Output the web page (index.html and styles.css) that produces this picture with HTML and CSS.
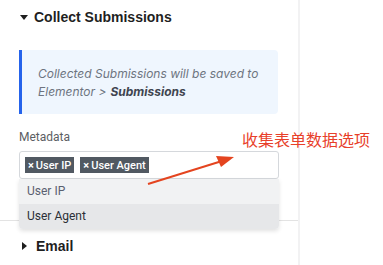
FILE: index.html
```html
<!DOCTYPE html>
<html>
<head>
<meta charset="utf-8">
<title>Collect Submissions</title>
<link rel="stylesheet" href="styles.css">
</head>
<body>

<div class="page">
  <div class="panel">
    <div class="section open">
      <div class="section-title"><span class="caret-down"></span>Collect Submissions</div>

      <div class="notice">
        Collected Submissions will be saved to Elementor &gt;<b>Submissions</b>
      </div>

      <div class="field">
        <div class="field-label">Metadata</div>
        <div class="select-wrap">
          <div class="select-box">
            <span class="tag"><span class="tag-x">&times;</span>User IP</span>
            <span class="tag"><span class="tag-x">&times;</span>User Agent</span>
          </div>
          <ul class="dropdown">
            <li class="option">User IP</li>
            <li class="option active">User Agent</li>
          </ul>
        </div>
      </div>
    </div>

    <div class="section">
      <div class="section-title"><span class="caret-right"></span>Email</div>
    </div>
  </div>
  <div class="side"></div>
</div>

<!-- annotation -->
<div class="note">收集表单数据选项</div>
<svg class="arrow" width="100" height="40" viewBox="0 0 100 40">
  <line x1="2" y1="32" x2="76" y2="9" stroke="#e4441f" stroke-width="2"/>
  <polygon points="88,5 70,4 75,15" fill="#e4441f"/>
</svg>

</body>
</html>
```

FILE: styles.css
```css
body {
  margin: 0;
  background: #fff;
  font-family: "Liberation Sans", Arial, sans-serif;
}

.page {
  display: flex;
  height: 265px;
}

.panel {
  width: 298px;
  border-right: 2px solid #f2f2f3;
}

.side {
  flex: 1;
}

.section {
  padding: 0 20px 0 19px;
}

.section.open {
  padding-top: 7px;
  padding-bottom: 41px;
  border-bottom: 1px solid #e3e3e3;
}

.section-title {
  display: flex;
  align-items: center;
  height: 20px;
  font-size: 14px;
  font-weight: bold;
  color: #1f1f1f;
}

.section .section-title {
  margin-top: 15px;
}

.section.open .section-title {
  margin-top: 0;
}

.caret-down {
  width: 0;
  height: 0;
  margin: 0 6px 0 1px;
  border-left: 4px solid transparent;
  border-right: 4px solid transparent;
  border-top: 5px solid #1f1f1f;
}

.caret-right {
  width: 0;
  height: 0;
  margin: 0 9px 0 3px;
  border-top: 4px solid transparent;
  border-bottom: 4px solid transparent;
  border-left: 5px solid #1f1f1f;
}

.notice {
  margin-top: 23px;
  padding: 15px 16px 13px 16px;
  background: #eff6fe;
  border-left: 3px solid #2563eb;
  border-radius: 0 4px 4px 0;
  font-family: Inter, "Liberation Sans", sans-serif;
  font-style: italic;
  font-size: 12px;
  line-height: 18px;
  color: #6d7480;
}

.notice b {
  margin-left: 4px;
  color: #3f4550;
}

.field {
  margin-top: 15px;
}

.field-label {
  font-family: Roboto, "Liberation Sans", sans-serif;
  font-size: 12px;
  color: #5b5e63;
  line-height: 16px;
}

.select-wrap {
  position: relative;
  margin-top: 6px;
}

.select-box {
  display: flex;
  gap: 6px;
  padding: 5px 5px 0 5px;
  box-sizing: border-box;
  height: 28px;
  border: 1px solid #d5d8dc;
  border-radius: 3px;
  width: 260px;
}

.tag {
  display: flex;
  align-items: center;
  height: 16px;
  padding: 0 3px;
  background: #515962;
  color: #fff;
  font-family: Roboto, "Liberation Sans", sans-serif;
  font-size: 11px;
  font-weight: 500;
}

.tag-x {
  font-weight: bold;
  margin-right: 2px;
}

.dropdown {
  position: absolute;
  top: 28px;
  left: 0;
  width: 260px;
  margin: 0;
  padding: 0;
  list-style: none;
  border-radius: 0 0 4px 4px;
  overflow: hidden;
  box-shadow: 0 2px 4px rgba(0, 0, 0, 0.12);
}

.option {
  height: 25px;
  line-height: 25px;
  padding-left: 8px;
  background: #f1f2f3;
  font-family: Roboto, "Liberation Sans", sans-serif;
  font-size: 12px;
  color: #5a6070;
}

.option.active {
  background: #e6e7e9;
  color: #2b2f36;
}

.note {
  position: absolute;
  left: 242px;
  top: 129px;
  font-family: "Noto Sans CJK SC", sans-serif;
  font-size: 16px;
  line-height: 20px;
  color: #e8402a;
}

.arrow {
  position: absolute;
  left: 146px;
  top: 152px;
}
```
